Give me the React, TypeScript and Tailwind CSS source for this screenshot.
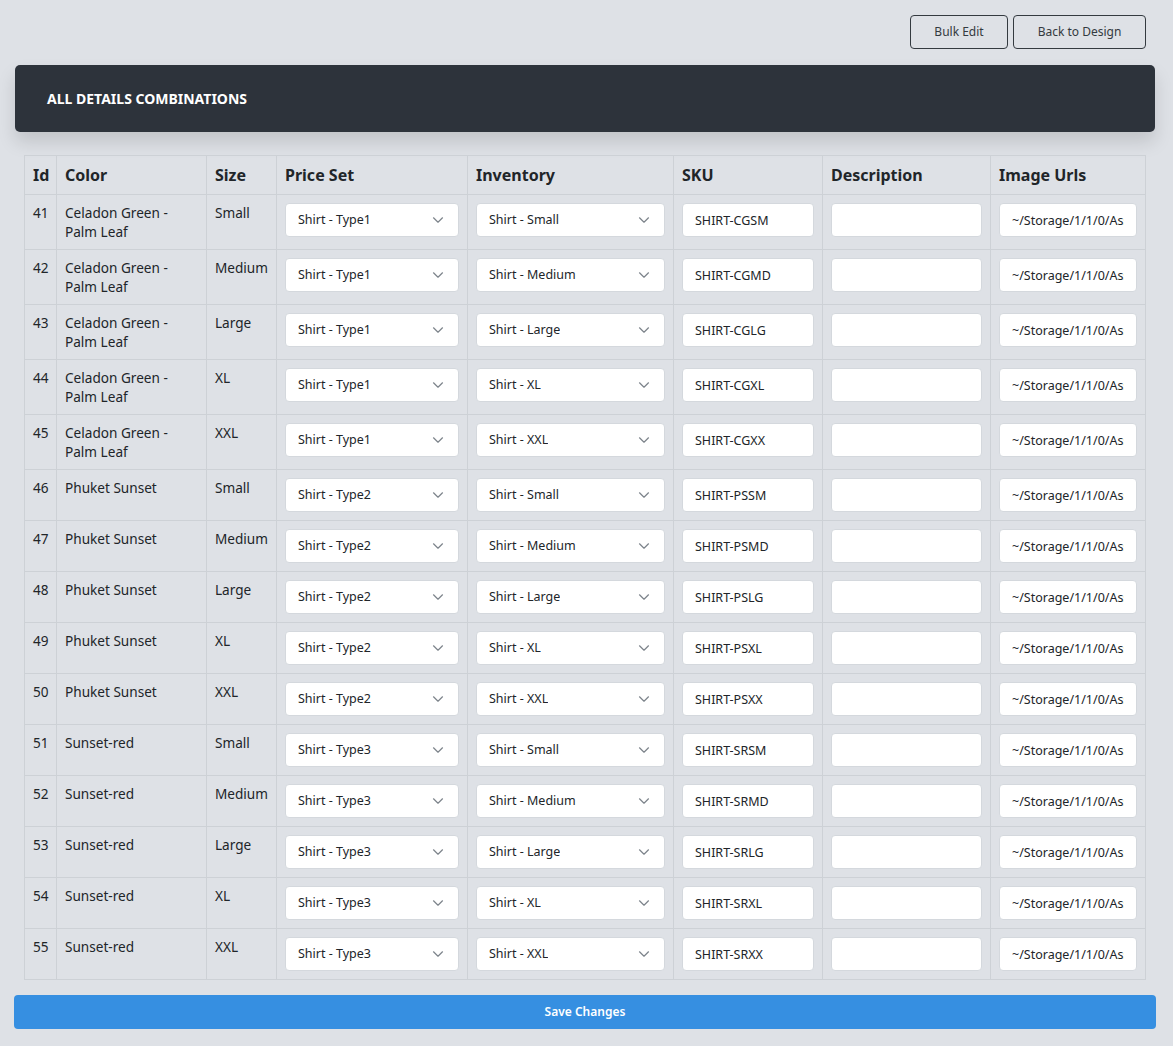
import React from "react";

type Row = {
  id: number;
  color: string;
  size: string;
  priceSet: string;
  inventory: string;
  sku: string;
};

const COLORS: { name: string; code: string; type: string }[] = [
  { name: "Celadon Green - Palm Leaf", code: "CG", type: "Type1" },
  { name: "Phuket Sunset", code: "PS", type: "Type2" },
  { name: "Sunset-red", code: "SR", type: "Type3" },
];

const SIZES: { name: string; code: string }[] = [
  { name: "Small", code: "SM" },
  { name: "Medium", code: "MD" },
  { name: "Large", code: "LG" },
  { name: "XL", code: "XL" },
  { name: "XXL", code: "XX" },
];

const ROWS: Row[] = COLORS.flatMap((c, ci) =>
  SIZES.map((s, si) => ({
    id: 41 + ci * 5 + si,
    color: c.name,
    size: s.name,
    priceSet: `Shirt - ${c.type}`,
    inventory: `Shirt - ${s.name}`,
    sku: `SHIRT-${c.code}${s.code}`,
  }))
);

function FakeSelect({ value }: { value: string }) {
  return (
    <div className="flex h-[34px] w-full items-center justify-between rounded-[4px] border border-[#d4d8dd] bg-white pl-3 pr-[14px] text-[12.5px] text-[#212529]">
      <span className="truncate">{value}</span>
      <svg width="12" height="8" viewBox="0 0 12 8" fill="none" className="shrink-0">
        <path d="M1.5 1.8l4.5 4.4 4.5-4.4" stroke="#7d848b" strokeWidth="1.2" strokeLinecap="round" strokeLinejoin="round" />
      </svg>
    </div>
  );
}

function TextBox({ value }: { value: string }) {
  return (
    <input
      readOnly
      defaultValue={value}
      className="block h-[34px] w-full rounded-[4px] border border-[#d4d8dd] bg-white px-3 text-[12.5px] text-[#212529] outline-none"
    />
  );
}

export default function App() {
  return (
    <div
      className="min-h-[1046px] bg-[#dee1e6] pl-[14px] pr-[17px] pt-[15px] pb-[18px] text-[#212529]"
      style={{ fontFamily: '"Noto Sans", "Open Sans", sans-serif' }}
    >
      {/* top actions */}
      <div className="flex justify-end gap-[5px] pr-[10px]">
        <button className="h-[34px] w-[98px] rounded-[4px] border border-[#343a40] text-[12px] text-[#343a40]">
          Bulk Edit
        </button>
        <button className="h-[34px] w-[133px] rounded-[4px] border border-[#343a40] text-[12px] text-[#343a40]">
          Back to Design
        </button>
      </div>

      {/* header card */}
      <div className="mx-px mt-4 flex h-[67px] items-center rounded-[5px] bg-[#2d333b] px-8 shadow-[0_10px_18px_rgba(0,0,0,0.13)]">
        <h1 className="text-[14px] font-bold text-white">ALL DETAILS COMBINATIONS</h1>
      </div>

      {/* table */}
      <div className="px-[10px] pt-[23px]">
        <table className="w-full table-fixed border-collapse border border-[#cdd1d6] text-[13.6px]">
          <colgroup>
            <col className="w-[32px]" />
            <col className="w-[150px]" />
            <col className="w-[70px]" />
            <col className="w-[191px]" />
            <col className="w-[206px]" />
            <col className="w-[149px]" />
            <col className="w-[168px]" />
            <col />
          </colgroup>
          <thead>
            <tr className="text-left text-[16px] font-bold">
              {["Id", "Color", "Size", "Price Set", "Inventory", "SKU", "Description", "Image Urls"].map((h) => (
                <th key={h} className="h-[39px] border border-[#cdd1d6] px-2 pt-[7px] pb-[7px] align-middle whitespace-nowrap">
                  {h}
                </th>
              ))}
            </tr>
          </thead>
          <tbody>
            {ROWS.map((r) => (
              <tr key={r.id}>
                <td className="border border-[#cdd1d6] px-2 py-2 align-top leading-[19px]">{r.id}</td>
                <td className="border border-[#cdd1d6] px-2 py-2 align-top leading-[19px]">{r.color}</td>
                <td className="border border-[#cdd1d6] px-2 py-2 align-top leading-[19px]">{r.size}</td>
                <td className="border border-[#cdd1d6] p-2 align-top">
                  <FakeSelect value={r.priceSet} />
                </td>
                <td className="border border-[#cdd1d6] p-2 align-top">
                  <FakeSelect value={r.inventory} />
                </td>
                <td className="border border-[#cdd1d6] p-2 align-top">
                  <TextBox value={r.sku} />
                </td>
                <td className="border border-[#cdd1d6] p-2 align-top">
                  <TextBox value="" />
                </td>
                <td className="border border-[#cdd1d6] p-2 align-top">
                  <TextBox value="~/Storage/1/1/0/Assets/Shirt.png" />
                </td>
              </tr>
            ))}
          </tbody>
        </table>
      </div>

      <button className="mt-[15px] h-[34px] w-full rounded-[4px] bg-[#368fe1] text-[12px] font-semibold text-white">
        Save Changes
      </button>
    </div>
  );
}
